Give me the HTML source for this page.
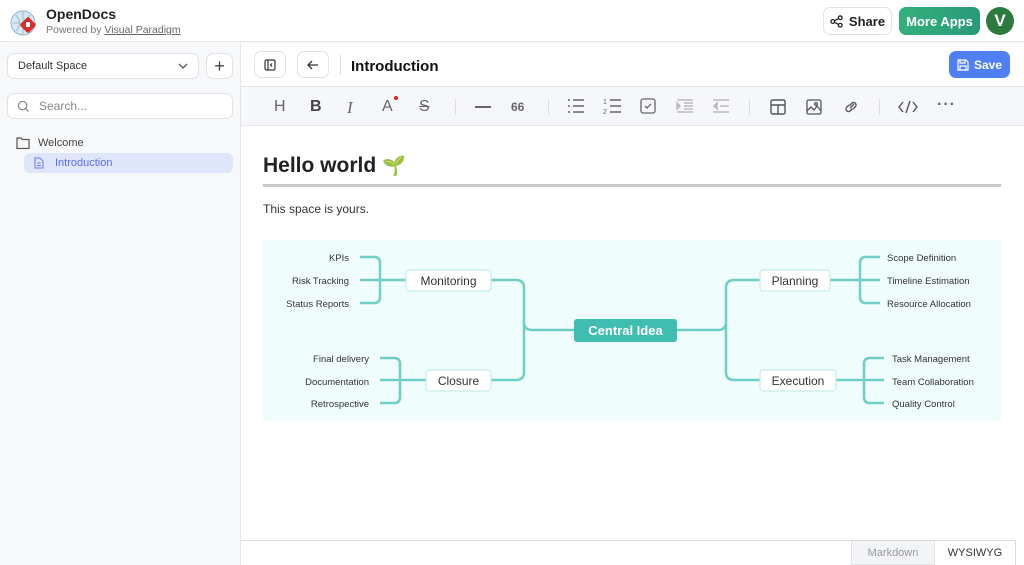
<!DOCTYPE html>
<html><head><meta charset="utf-8"><style>
*{box-sizing:border-box;margin:0;padding:0}
body{width:1024px;height:565px;overflow:hidden;font-family:"Liberation Sans","DejaVu Sans",sans-serif;background:#fff;color:#222;position:relative}
.abs{position:absolute}
.btn{position:absolute;border:1px solid #dfe2e6;border-radius:7px;background:#fff;display:flex;align-items:center;justify-content:center}
.tb{position:absolute;top:98px;color:#666;font-size:16px}
</style></head><body>
<div class="abs" style="left:0;top:0;width:1024px;height:42px;border-bottom:1px solid #e3e5e8;box-shadow:0 1px 3px rgba(0,0,0,.06)"></div>
<svg class="abs" style="left:10px;top:9px" width="28" height="28" viewBox="0 0 28 28"><circle cx="13" cy="14" r="12" fill="#d8e8f3" stroke="#8fb3cf"/><path d="M3 14h20M13 2v24M6 6q7 8 0 16M20 6q-7 8 0 16" stroke="#9bbad3" fill="none"/><rect x="12" y="10" width="12" height="12" rx="2" fill="#d92b2b" transform="rotate(45 18 16)"/><rect x="16" y="13" width="4" height="5" fill="#fff"/></svg>
<div class="abs" style="left:46px;top:6px;font-size:14px;font-weight:bold;color:#222">OpenDocs</div>
<div class="abs" style="left:46px;top:24px;font-size:10.5px;color:#777">Powered by <span style="text-decoration:underline;color:#666">Visual Paradigm</span></div>
<div class="btn" style="left:823px;top:7px;width:69px;height:28px;font-size:13px;font-weight:bold;color:#222;gap:6px"><svg width="13" height="13" viewBox="0 0 14 14" fill="none" stroke="#222" stroke-width="1.4"><circle cx="11" cy="3" r="2"/><circle cx="3" cy="7" r="2"/><circle cx="11" cy="11" r="2"/><path d="M5 6l4-2M5 8l4 2"/></svg>Share</div>
<div class="abs" style="left:899px;top:7px;width:81px;height:28px;border-radius:7px;background:linear-gradient(90deg,#33b07a,#2a9a7a);color:#fff;font-size:13px;font-weight:bold;display:flex;align-items:center;justify-content:center">More Apps</div>
<div class="abs" style="left:986px;top:7px;width:28px;height:28px;border-radius:50%;background:#2b7a3e;color:#fff;font-weight:bold;font-size:17px;display:flex;align-items:center;justify-content:center">V</div>
<div class="abs" style="left:0;top:43px;width:241px;height:522px;background:#f7f8fa;border-right:1px solid #e3e5e8"></div>
<div class="btn" style="left:7px;top:53px;width:192px;height:26px;justify-content:space-between;padding:0 10px;font-size:11px;color:#333">Default Space<svg width="10" height="6" viewBox="0 0 10 6"><path d="M1 1l4 4 4-4" stroke="#555" fill="none" stroke-width="1.3"/></svg></div>
<div class="btn" style="left:206px;top:53px;width:27px;height:26px;font-size:18px;color:#444">+</div>
<div class="btn" style="left:7px;top:93px;width:226px;height:26px;justify-content:flex-start;padding-left:9px;gap:9px;font-size:12px;color:#888"><svg width="13" height="13" viewBox="0 0 14 14" fill="none" stroke="#888" stroke-width="1.3"><circle cx="6" cy="6" r="4.5"/><path d="M9.5 9.5l3 3"/></svg>Search...</div>
<svg class="abs" style="left:16px;top:137px" width="14" height="12" viewBox="0 0 14 12" fill="none" stroke="#555" stroke-width="1.2"><path d="M1 1h4l1.5 1.5H13v9H1z"/></svg>
<div class="abs" style="left:38px;top:137px;font-size:11px;color:#444">Welcome</div>
<div class="abs" style="left:24px;top:153px;width:209px;height:20px;background:#dfe6fb;border-radius:6px"></div>
<svg class="abs" style="left:34px;top:157px" width="10" height="12" viewBox="0 0 10 12" fill="none" stroke="#6b7ff0" stroke-width="1.1"><path d="M1 1h5l3 3v7H1zM3 6h4M3 8.5h4"/></svg>
<div class="abs" style="left:55px;top:157px;font-size:11px;color:#5b6ef0">Introduction</div>
<div class="btn" style="left:254px;top:51px;width:32px;height:27px"><svg width="12" height="12" viewBox="0 0 12 12" fill="none" stroke="#333" stroke-width="1.2"><rect x="1" y="1" width="10" height="10" rx="1.5"/><path d="M4 1v10M8 4.5L6.5 6 8 7.5"/></svg></div>
<div class="btn" style="left:297px;top:51px;width:32px;height:27px"><svg width="12" height="10" viewBox="0 0 12 10" fill="none" stroke="#333" stroke-width="1.3"><path d="M11 5H1M5 1L1 5l4 4"/></svg></div>
<div class="abs" style="left:340px;top:55px;width:1px;height:20px;background:#ddd"></div>
<div class="abs" style="left:351px;top:58px;font-size:15px;font-weight:bold;color:#111">Introduction</div>
<div class="abs" style="left:949px;top:51px;width:61px;height:27px;border-radius:7px;background:#4f7ff5;color:#fff;font-size:12px;font-weight:bold;display:flex;align-items:center;justify-content:center;gap:5px"><svg width="12" height="12" viewBox="0 0 12 12" fill="none" stroke="#fff" stroke-width="1.2"><path d="M1 1h8l2 2v8H1zM3 1v3h5V1M3 11V7h6v4"/></svg>Save</div>
<div class="abs" style="left:241px;top:86px;width:783px;height:1px;background:#e3e5e8"></div>
<div class="abs" style="left:241px;top:87px;width:783px;height:39px;background:#f5f7fa;border-bottom:1px solid #e8eaed"></div>
<div class="tb" style="left:274px">H</div>
<div class="tb" style="left:310px;font-weight:bold;color:#444">B</div>
<div class="tb" style="left:347px;font-style:italic;font-family:'Liberation Serif',serif;font-size:17px">I</div>
<div class="tb" style="left:382px">A<span style="position:absolute;left:12px;top:-2px;width:4px;height:4px;border-radius:50%;background:#e22"></span></div>
<div class="tb" style="left:419px;text-decoration:line-through">S</div>
<div class="abs" style="left:455px;top:99px;width:1px;height:16px;background:#ddd"></div>
<div class="abs" style="left:475px;top:106px;width:16px;height:2px;background:#666"></div>
<div class="tb" style="left:511px;font-size:12px;font-weight:bold;top:100px">66</div>
<div class="abs" style="left:548px;top:99px;width:1px;height:16px;background:#ddd"></div>
<svg class="abs" style="left:567px;top:98px" width="18" height="16" viewBox="0 0 18 16" stroke="#666" stroke-width="1.5"><path d="M6 2h11M6 8h11M6 14h11M1 2h2M1 8h2M1 14h2"/></svg>
<svg class="abs" style="left:603px;top:97px" width="18" height="18" viewBox="0 0 18 18" stroke="#666" stroke-width="1.5" fill="none"><path d="M7 3h11M7 9h11M7 15h11"/><text x="0" y="7" font-size="7" fill="#666" stroke="none">1</text><text x="0" y="17" font-size="7" fill="#666" stroke="none">2</text></svg>
<svg class="abs" style="left:640px;top:98px" width="16" height="16" viewBox="0 0 16 16" fill="none" stroke="#666" stroke-width="1.3"><rect x="1" y="1" width="14" height="14" rx="2"/><path d="M5 8l2 2 4-4"/></svg>
<svg class="abs" style="left:676px;top:99px" width="17" height="14" viewBox="0 0 17 14" stroke="#bbb" stroke-width="1.5"><path d="M1 1h16M8 7h9M1 13h16M8 4h9M8 10h9"/><path d="M1 4l3 3-3 3z" fill="#bbb"/></svg>
<svg class="abs" style="left:712px;top:99px" width="17" height="14" viewBox="0 0 17 14" stroke="#bbb" stroke-width="1.5"><path d="M1 1h16M8 7h9M1 13h16"/><path d="M5 4L2 7l3 3z" fill="#bbb"/></svg>
<div class="abs" style="left:749px;top:99px;width:1px;height:16px;background:#ddd"></div>
<svg class="abs" style="left:770px;top:99px" width="16" height="16" viewBox="0 0 16 16" fill="none" stroke="#555" stroke-width="1.4"><rect x="1" y="1" width="14" height="14" rx="1.5"/><path d="M1 6h14M8 6v9"/></svg>
<svg class="abs" style="left:806px;top:99px" width="16" height="16" viewBox="0 0 16 16" fill="none" stroke="#555" stroke-width="1.3"><rect x="1" y="1" width="14" height="14" rx="1.5"/><path d="M1 12l4-4 3 3 3-4 4 5"/><circle cx="10" cy="5" r="1.3"/></svg>
<svg class="abs" style="left:843px;top:99px" width="16" height="16" viewBox="0 0 16 16" fill="none" stroke="#555" stroke-width="1.4"><path d="M7 9l4-4M6 6L3.5 8.5a2.5 2.5 0 003.5 3.5L9.5 9.5M10 10l2.5-2.5A2.5 2.5 0 009 4L6.5 6.5"/></svg>
<div class="abs" style="left:879px;top:99px;width:1px;height:16px;background:#ddd"></div>
<svg class="abs" style="left:898px;top:100px" width="20" height="14" viewBox="0 0 20 14" fill="none" stroke="#555" stroke-width="1.4"><path d="M5 2L1 7l4 5M15 2l4 5-4 5M12 1L8 13"/></svg>
<div class="tb" style="left:937px;top:96px;letter-spacing:1px;font-weight:bold">···</div>
<div class="abs" style="left:263px;top:154px;font-size:21px;font-weight:bold;color:#222">Hello world <span style="font-size:19px">🌱</span></div>
<div class="abs" style="left:263px;top:184px;width:738px;height:3px;background:#c8c8c8"></div>
<div class="abs" style="left:263px;top:202px;font-size:12px;color:#333">This space is yours.</div>
<svg class="abs" style="left:263px;top:240px" width="738" height="181" viewBox="263 240 738 181" font-family="Liberation Sans, sans-serif">
<rect x="263" y="240" width="738" height="181" fill="#effdfd"/>
<g fill="none" stroke="#6fcfc6" stroke-width="2.5">
<path d="M574 330H532q-8 0-8-8V288q0-8-8-8H491M524 322v50q0 8-8 8H491"/>
<path d="M677 330H718q8 0 8-8V288q0-8 8-8H760M726 322v50q0 8 8 8H760"/>
<path d="M360 257h14q6 0 6 6v34q0 6-6 6h-14M360 280h46"/>
<path d="M380 358h14q6 0 6 6v33q0 6-6 6h-14M380 380h46"/>
<path d="M880 257h-14q-6 0-6 6v34q0 6 6 6h14M830 280h50"/>
<path d="M884 358h-14q-6 0-6 6v33q0 6 6 6h14M836 380h48"/>
</g>
<g fill="#fff" stroke="#c4ece7" stroke-width="1.2">
<rect x="406" y="270" width="85" height="21" rx="3"/><rect x="426" y="370" width="65" height="21" rx="3"/>
<rect x="760" y="270" width="70" height="21" rx="3"/><rect x="760" y="370" width="76" height="21" rx="3"/>
</g>
<rect x="574" y="319" width="103" height="23" rx="3" fill="#3fbdb0"/>
<text x="625.5" y="335" text-anchor="middle" fill="#fff" font-size="13" font-weight="bold">Central Idea</text>
<g font-size="12" fill="#333" text-anchor="middle">
<text x="448.5" y="285">Monitoring</text><text x="458.5" y="385">Closure</text>
<text x="795" y="285">Planning</text><text x="798" y="385">Execution</text>
</g>
<g font-size="9.5" fill="#333" text-anchor="end">
<text x="349" y="261">KPIs</text><text x="349" y="284">Risk Tracking</text><text x="349" y="307">Status Reports</text>
<text x="369" y="362">Final delivery</text><text x="369" y="385">Documentation</text><text x="369" y="407">Retrospective</text>
</g>
<g font-size="9.5" fill="#333">
<text x="887" y="261">Scope Definition</text><text x="887" y="284">Timeline Estimation</text><text x="887" y="307">Resource Allocation</text>
<text x="892" y="362">Task Management</text><text x="892" y="385">Team Collaboration</text><text x="892" y="407">Quality Control</text>
</g>
</svg>
<div class="abs" style="left:241px;top:540px;width:775px;height:1px;background:#ddd"></div>
<div class="abs" style="left:1015px;top:540px;width:1px;height:25px;background:#ddd"></div>
<div class="abs" style="left:851px;top:541px;width:84px;height:24px;background:#f2f4f7;border:1px solid #e0e3e6;border-top:none;font-size:11px;color:#999;display:flex;align-items:center;justify-content:center">Markdown</div>
<div class="abs" style="left:935px;top:541px;width:80px;height:24px;font-size:11px;color:#333;display:flex;align-items:center;justify-content:center">WYSIWYG</div>
</body></html>
